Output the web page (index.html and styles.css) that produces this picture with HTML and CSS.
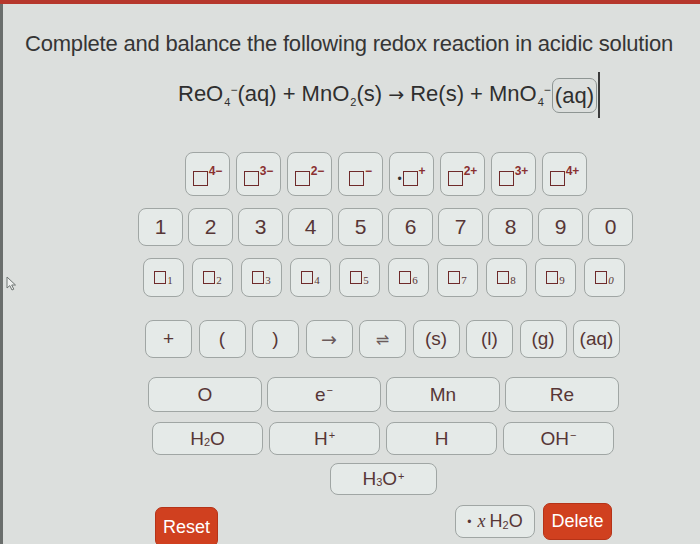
FILE: index.html
```html
<!DOCTYPE html>
<html>
<head>
<meta charset="utf-8">
<link rel="stylesheet" href="styles.css">
</head>
<body>
<div class="topbar"></div>
<div class="page">
  <svg class="pointer" width="12" height="16" viewBox="0 0 12 16"><path d="M1 1 L1 12 L3.8 9.6 L6 14 L7.8 13.2 L5.7 9 L9.5 9 Z" fill="#eef0ef" stroke="#6f7573" stroke-width="1"/></svg>
  <h1 class="title">Complete and balance the following redox reaction in acidic solution</h1>
  <div class="eq">ReO<span class="dn">4</span><span class="up">−</span>(aq) + MnO<span class="dn">2</span>(s) <span class="arr">→</span> Re(s) + MnO<span class="dn">4</span><span class="up">−</span><span class="aq">(aq)</span><span class="caret"></span></div>

  <div class="row r1">
    <div class="key"><span class="sq"></span><span class="ch">4−</span></div>
    <div class="key"><span class="sq"></span><span class="ch">3−</span></div>
    <div class="key"><span class="sq"></span><span class="ch">2−</span></div>
    <div class="key"><span class="sq"></span><span class="ch">−</span></div>
    <div class="key"><span class="dot">•</span><span class="sq"></span><span class="ch">+</span></div>
    <div class="key"><span class="sq"></span><span class="ch">2+</span></div>
    <div class="key"><span class="sq"></span><span class="ch">3+</span></div>
    <div class="key"><span class="sq"></span><span class="ch">4+</span></div>
  </div>

  <div class="row r2">
    <div class="key">1</div><div class="key">2</div><div class="key">3</div><div class="key">4</div><div class="key">5</div>
    <div class="key">6</div><div class="key">7</div><div class="key">8</div><div class="key">9</div><div class="key">0</div>
  </div>

  <div class="row r3">
    <div class="key"><span class="sq2"></span><span class="sb">1</span></div>
    <div class="key"><span class="sq2"></span><span class="sb">2</span></div>
    <div class="key"><span class="sq2"></span><span class="sb">3</span></div>
    <div class="key"><span class="sq2"></span><span class="sb">4</span></div>
    <div class="key"><span class="sq2"></span><span class="sb">5</span></div>
    <div class="key"><span class="sq2"></span><span class="sb">6</span></div>
    <div class="key"><span class="sq2"></span><span class="sb">7</span></div>
    <div class="key"><span class="sq2"></span><span class="sb">8</span></div>
    <div class="key"><span class="sq2"></span><span class="sb">9</span></div>
    <div class="key"><span class="sq2"></span><span class="sb it">0</span></div>
  </div>

  <div class="row r4">
    <div class="key">+</div><div class="key">(</div><div class="key">)</div>
    <div class="key sym arrow">→</div><div class="key sym">⇌</div>
    <div class="key">(s)</div><div class="key">(l)</div><div class="key">(g)</div><div class="key">(aq)</div>
  </div>

  <div class="row r5">
    <div class="key wide">O</div>
    <div class="key wide">e<sup class="sp">−</sup></div>
    <div class="key wide">Mn</div>
    <div class="key wide">Re</div>
  </div>

  <div class="row r6">
    <div class="key wide">H<sub class="sub">2</sub>O</div>
    <div class="key wide">H<sup class="sp">+</sup></div>
    <div class="key wide">H</div>
    <div class="key wide">OH<sup class="sp">−</sup></div>
  </div>

  <div class="row r7">
    <div class="key wide">H<sub class="sub">3</sub>O<sup class="sp">+</sup></div>
  </div>

  <div class="row r8">
    <div class="btn red reset">Reset</div>
    <div class="key xh"><span class="bul">•</span><span class="xi">x</span>H<sub class="sub">2</sub>O</div>
    <div class="btn red del">Delete</div>
  </div>
</div>
</body>
</html>
```

FILE: styles.css
```css
* { box-sizing: border-box; }
html, body { margin: 0; padding: 0; }
body {
  width: 700px;
  height: 544px;
  overflow: hidden;
  background: #dcdfdd;
  font-family: "Liberation Sans", Arial, sans-serif;
}
.topbar { height: 4px; background: #b6372c; }
.page {
  position: relative;
  height: 540px;
  border-left: 3px solid #6a6e6c;
  overflow: hidden;
}
.pointer { position: absolute; left: 3px; top: 272px; }
.title {
  margin: 27px 0 0 22px;
  font-size: 22px;
  line-height: 26px;
  font-weight: normal;
  letter-spacing: -0.2px;
  color: #353535;
  white-space: nowrap;
}
.eq {
  margin: 15px 0 0 175px;
  height: 40px;
  line-height: 40px;
  font-size: 22px;
  color: #2f2f2f;
  white-space: nowrap;
}
.eq .dn {
  font-size: 11px;
  position: relative;
  top: 5px;
  margin-left: 1px;
}
.eq .up {
  font-size: 12px;
  position: relative;
  top: -7px;
}
.arr { font-family: "DejaVu Sans", sans-serif; font-size: 19px; }
.aq {
  display: inline-block;
  line-height: 33px;
  padding: 0 2px;
  border: 1.5px solid #8e9593;
  border-radius: 7px;
  vertical-align: middle;
  margin-left: 1px;
}
.caret {
  display: inline-block;
  width: 2px;
  height: 46px;
  background: #3b3b3b;
  vertical-align: middle;
  margin-left: 1px;
}

.row { display: flex; }
.key {
  display: flex;
  align-items: center;
  justify-content: center;
  background: #e5eae8;
  border: 1.5px solid #a0a6a4;
  border-radius: 8px;
  color: #573636;
  font-size: 20px;
  flex: none;
}
.r1 { margin: 40px 0 0 182px; gap: 6px; }
.r1 .key { width: 45px; height: 44px; }
.sq {
  display: inline-block;
  width: 15px;
  height: 15px;
  border: 1.5px solid #6e2a2a;
  margin-top: 8px;
}
.ch {
  align-self: flex-start;
  margin-top: 11px;
  font-size: 12px;
  font-weight: bold;
  color: #8a3030;
  margin-left: 1px;
}
.dot { font-size: 12px; margin-top: 10px; margin-right: 1px; color: #333; }

.r2 { margin: 12px 0 0 135px; gap: 5px; }
.r2 .key { width: 45px; height: 38px; font-size: 21px; }

.r3 { margin: 12px 0 0 140px; gap: 8px; }
.r3 .key { width: 41px; height: 39px; }
.sq2 {
  display: inline-block;
  width: 12px;
  height: 13px;
  border: 1.5px solid #6e2a2a;
}
.sb {
  font-family: "Liberation Serif", "Times New Roman", serif;
  font-size: 11px;
  align-self: flex-end;
  margin-bottom: 10px;
  margin-left: 1px;
}
.sb.it { font-style: italic; }

.r4 { margin: 23px 0 0 142px; gap: 6.5px; }
.r4 .key { width: 47px; height: 38px; font-size: 19px; }
.r4 .sym { font-family: "DejaVu Sans", sans-serif; font-size: 16px; color: #6b5b5b; }
.r4 .arrow { font-size: 19px; }

.r5 { margin: 19px 0 0 145px; gap: 5px; }
.r5 .key { width: 114px; height: 35px; font-size: 19px; }
.r6 { margin: 10px 0 0 149px; gap: 6px; }
.r6 .key { width: 111px; height: 33px; font-size: 19px; }
.r7 { margin: 8px 0 0 327px; }
.r7 .key { width: 107px; height: 32px; font-size: 19px; }
.sp { font-size: 11px; align-self: flex-start; margin-top: 6px; margin-left: 1px; }
.sub { font-size: 11px; align-self: flex-end; margin-bottom: 6px; }

.r8 { margin: 8px 0 0 152px; align-items: flex-start; }
.btn {
  display: flex;
  align-items: center;
  justify-content: center;
  color: #fff;
  font-size: 18px;
  border-radius: 7px;
}
.red { background: #d0401f; border: 1.5px solid #b53318; }
.reset { width: 63px; height: 40px; margin-top: 4px; }
.xh { width: 80px; height: 33px; margin: 2px 0 0 237px; font-size: 18px; }
.bul { font-size: 12px; margin-right: 6px; }
.xi { font-family: "Liberation Serif", serif; font-style: italic; margin-right: 4px; }
.del { width: 69px; height: 37px; margin-left: 8px; }
```
